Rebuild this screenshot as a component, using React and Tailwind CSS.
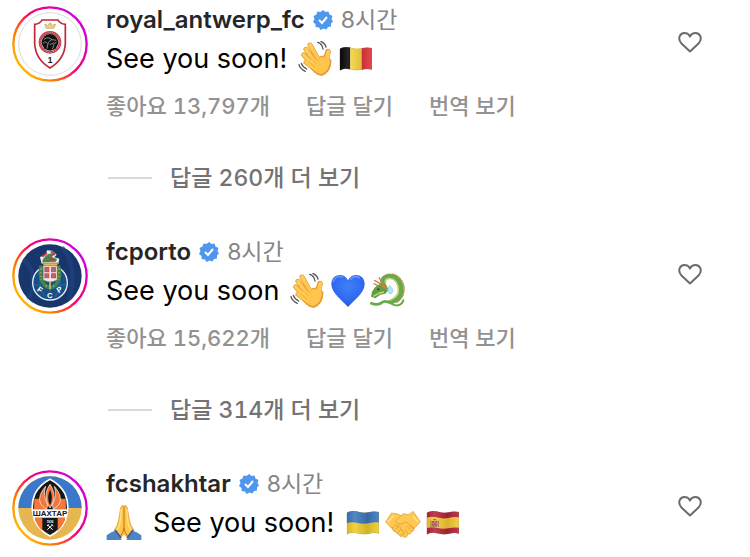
import { useState } from "react";

// Emoji drawings, all on the same 108 unit box
function Wave() {
    const fingers = "M66 66 36 12M54 68 24 25M50 76 17 42M52 84 24 64";
    return (
        <svg viewBox="0 0 108 108" className="size-9" role="img" aria-label="waving hand">
            <g fill="none" strokeLinecap="round" strokeLinejoin="round">
                <path d={fingers} stroke="#df972f" strokeWidth="15" />
                <path d="M80 70 90 32" stroke="#df972f" strokeWidth="17" />
                <path d="M48 62 68 46Q78 50 83 38L99 58Q98 94 73 103Q56 104 38 82Z" fill="#e9a43a" stroke="#df972f" strokeWidth="3" />
                <path d={fingers} stroke="#ffca55" strokeWidth="11" />
                <path d="M82 68 91 32" stroke="#ffca55" strokeWidth="12" />
                <path d="M48 62 68 48Q78 53 86 42L96 58Q94 88 72 98Q56 98 42 80Z" fill="#ffc64e" />
                <path d="M43 35 61 60M32 46 54 68M31 62 49 77" stroke="#e6a136" strokeWidth="2" />
                <path d="M59 4Q72 7 75 24M69 1Q82 8 84 18M3 71Q6 84 22 91M10 67Q13 77 26 84" stroke="#555" strokeWidth="4" />
            </g>
        </svg>
    );
}

function Heart() {
    return (
        <svg viewBox="0 0 108 108" className="size-9" role="img" aria-label="blue heart">
            <defs>
                <radialGradient id="heartFill" cx="50%" cy="35%" r="65%">
                    <stop offset="0" stopColor="#3f80fa" />
                    <stop offset=".7" stopColor="#2f68ef" />
                    <stop offset="1" stopColor="#2858d6" />
                </radialGradient>
            </defs>
            <path d="M54 102C39 84 4 61 4 33C4 2 43-4 54 22C65-4 104 2 104 33C104 61 69 84 54 102Z" fill="url(#heartFill)" />
            <path d="M10 25Q18 6 36 12M62 18Q72 6 88 14" fill="none" stroke="#79a9ff" strokeWidth="5" strokeLinecap="round" opacity=".7" />
        </svg>
    );
}

function Dragon() {
    return (
        <svg viewBox="0 0 108 108" className="size-9" role="img" aria-label="dragon">
            <g fill="none" strokeLinecap="round" strokeLinejoin="round">
                <path d="M34 24Q37 7 56 4Q80 1 94 22Q108 44 98 68Q92 80 80 88" stroke="#cf9448" strokeWidth="5" strokeDasharray="2 5" />
                <path d="M42 38Q33 22 47 13Q67 5 83 20Q100 43 91 66Q83 81 64 87" stroke="#68a94b" strokeWidth="14" />
                <path d="M47 30Q43 20 54 17Q69 14 79 28Q89 46 83 63Q76 75 62 81" stroke="#c3cf7c" strokeWidth="5" />
                <path d="M80 80Q62 93 50 86Q42 83 34 90Q20 98 4 91" stroke="#68a94b" strokeWidth="8" />
                <path d="M56 84Q68 99 84 97Q97 94 100 82" stroke="#68a94b" strokeWidth="6" />
                <path d="M34 34 14 22M28 40 12 32M34 28 28 14" stroke="#d08349" strokeWidth="4" />
            </g>
            <path d="M15 43 31 32 48 36 56 50 46 62 31 65 16 76 3 71 6 56Z" fill="#5e9f43" />
            <path d="M28 37 41 30 51 41 48 52 40 45Z" fill="#b9853f" />
            <path d="M10 70 29 60 42 57" fill="none" stroke="#d3cf74" strokeWidth="4" />
            <circle cx="25" cy="49" r="3" fill="#233d25" />
            <path d="M58 37Q70 46 69 55Q65 67 57 61Q49 55 58 37Z" fill="#b4e6f2" stroke="#8bd0e4" strokeWidth="2" />
        </svg>
    );
}

function Pray() {
    return (
        <svg viewBox="0 0 108 108" className="size-9" role="img" aria-label="folded hands">
            <path d="M2 91Q21 76 33 78L47 105H2ZM106 91Q87 76 75 78L61 105H106Z" fill="#4d84c5" />
            <path d="M54 3Q47-2 44 8L38 45Q36 60 25 75L43 100 54 87 66 100 84 75Q72 60 70 45L64 8Q61-2 54 3Z" fill="#ffc64c" stroke="#dc9631" strokeWidth="2" />
            <path d="M54 4V69Q53 81 43 94M54 69Q56 83 66 95" fill="none" stroke="#ba7427" strokeWidth="3" />
            <path d="M46 12 43 48Q41 66 32 77M62 12 65 48Q67 66 76 77" fill="none" stroke="#ffe27b" strokeWidth="4" />
            <path d="M27 75 45 99M81 75 64 99" stroke="#315f9f" strokeWidth="6" />
        </svg>
    );
}

function Handshake() {
    return (
        <svg viewBox="0 0 108 108" className="size-9" role="img" aria-label="handshake">
            <g fill="#ffc84e" stroke="#d9952f" strokeWidth="2" strokeLinejoin="round" strokeLinecap="round">
                <path d="M19 25 2 51 19 69 58 97Q67 98 69 87Q78 89 79 80Q88 80 87 70L60 38 38 27Z" />
                <path d="M85 20 106 50 91 67 82 70 63 50Q42 65 34 52Q29 48 38 42L55 26 70 29Z" />
                <path d="M22 69 31 60Q39 59 37 67L45 64Q51 68 46 74Q55 73 54 81Q61 83 57 88L52 93Q43 97 42 87Q33 89 34 80Q24 83 22 69Z" />
                <path d="m36 68-7 8M46 75l-7 8M54 83l-7 8M60 74l9 12M67 65l13 14M76 59l12 12" fill="none" />
                <path d="M9 50 24 35M98 50 85 35" fill="none" stroke="#ffe280" strokeWidth="5" />
            </g>
        </svg>
    );
}

function Flag({ label, children }) {
    const outline = "M5 23Q17 15 34 19Q53 25 70 22Q86 17 102 21V86Q87 82 70 87Q53 90 35 85Q18 80 5 89Z";
    const id = `flag-${label}`;
    return (
        <svg viewBox="0 0 108 108" className="size-9" role="img" aria-label={`flag of ${label}`}>
            <defs>
                <clipPath id={id}><path d={outline} /></clipPath>
                <linearGradient id={`${id}-shade`}>
                    <stop offset="0" stopColor="#000" stopOpacity=".1" />
                    <stop offset=".25" stopColor="#fff" stopOpacity=".12" />
                    <stop offset=".65" stopColor="#000" stopOpacity=".12" />
                    <stop offset="1" stopColor="#fff" stopOpacity=".1" />
                </linearGradient>
            </defs>
            <g clipPath={`url(#${id})`}>
                {children}
                <path d={outline} fill={`url(#${id}-shade)`} stroke="#777" strokeOpacity=".5" strokeWidth="2" />
            </g>
        </svg>
    );
}

function BelgiumFlag() {
    return (
        <Flag label="Belgium">
            <path d="M0 0H37V108H0Z" fill="#080808" />
            <path d="M37 0H71V108H37Z" fill="#ffdc43" />
            <path d="M71 0H108V108H71Z" fill="#e1323b" />
        </Flag>
    );
}

function UkraineFlag() {
    return (
        <Flag label="Ukraine">
            <path d="M0 0H108V108H0Z" fill="#efcb2d" />
            <path d="M0 0H108V53Q88 50 70 55Q53 58 35 53Q18 49 0 56Z" fill="#3e77bd" />
        </Flag>
    );
}

function SpainFlag() {
    return (
        <Flag label="Spain">
            <path d="M0 0H108V108H0Z" fill="#b42536" />
            <path d="M0 39Q18 33 35 37Q53 42 70 39Q88 34 108 38V69Q88 65 70 70Q53 73 35 68Q18 64 0 72Z" fill="#f7c838" />
            <path d="M21 48H37V62Q29 72 21 62Z" fill="#b4483e" />
            <path d="M18 47V66M40 47V66" stroke="#8c695a" strokeWidth="3" />
            <path d="M23 46Q29 36 35 46Z" fill="#a14a34" />
            <path d="M29 49V65M22 56H36" stroke="#e5b4a0" strokeWidth="2" />
            <circle cx="29" cy="57" r="3" fill="#4b5a86" />
        </Flag>
    );
}

// Club crests, drawn inside the story ring
function AntwerpCrest() {
    return (
        <g>
            <circle cx="114" cy="114" r="94" fill="#fff" stroke="#dcdcdc" strokeWidth="3" />
            <path d="M90 42H138Q143 53 160 55V112Q158 160 114 186Q70 160 68 112V55Q85 53 90 42Z" fill="#fff" stroke="#bd2637" strokeWidth="5" />
            <path d="M102 67 98 54 107 58 114 50 121 58 131 54 126 67Z" fill="#e7cf8c" stroke="#c9a75a" strokeWidth="2" />
            <circle cx="114" cy="53" r="3" fill="#d7b562" />
            <circle cx="114" cy="109" r="30" fill="#fff" stroke="#c43a49" strokeWidth="8" />
            <circle cx="114" cy="109" r="30" fill="none" stroke="#efc9cd" strokeWidth="2" strokeDasharray="3 4" />
            <circle cx="114" cy="109" r="25" fill="#111" />
            <path d="M96 100Q108 90 120 101L133 103M120 101Q107 104 105 128M93 112Q100 103 107 113M133 108Q125 112 121 130M113 116 127 110" fill="none" stroke="#c4c4c4" strokeWidth="2" />
            <text x="114" y="171" textAnchor="middle" fontSize="25" fontWeight="700" fill="#111">1</text>
        </g>
    );
}

function PortoCrest() {
    return (
        <g>
            <circle cx="114" cy="114" r="95" fill="#18366c" />
            <path d="M35 65Q82 105 51 183M150 28Q199 85 171 185" fill="none" stroke="#234681" strokeWidth="14" opacity=".5" />
            <circle cx="114" cy="134" r="52" fill="#174f86" stroke="#e8eff6" strokeWidth="4" />
            <path d="M86 99Q76 143 99 177M142 99Q153 143 129 177M66 139Q114 154 162 139M114 148V184" fill="none" stroke="#3a6f9f" strokeWidth="2" />
            <path d="M89 77 84 57 102 50 105 37 121 38 134 50 127 58 142 62 139 78Z" fill="#f2eee8" />
            <path d="M92 65Q108 39 130 48L119 57 135 63 132 71 91 73Z" fill="#488250" />
            <path d="M91 56 105 45M117 40 129 50M112 58 126 69" stroke="#c53c42" strokeWidth="6" />
            <path d="M92 75H138L135 83H95Z" fill="#ddb957" stroke="#9a682e" strokeWidth="2" />
            <path d="M88 83Q79 127 103 145Q114 152 126 145Q150 127 139 83" fill="none" stroke="#3e8453" strokeWidth="11" />
            <path d="M87 91V125M141 91V125M101 144 126 144" stroke="#d3a748" strokeWidth="4" strokeDasharray="4 7" />
            <path d="M94 84H135V125Q114 137 94 125Z" fill="#f5e7e3" stroke="#d1a055" strokeWidth="2" />
            <path d="M97 87H112V103H97ZM117 106H132V121H117Z" fill="#dc4950" />
            <path d="M117 87H132V103H117ZM97 106H112V121H97Z" fill="#d45660" />
            <path d="M101 91H108V98H101ZM121 91H128V98H121ZM101 110H108V117H101ZM121 110H128V117H121Z" fill="#6d83b0" />
            <path d="M114 130V154" stroke="#d6ba67" strokeWidth="5" />
            <g fill="#fff" fontSize="23" fontWeight="700" textAnchor="middle">
                <text x="84" y="163" transform="rotate(36 84 155)">F</text>
                <text x="113" y="180">C</text>
                <text x="142" y="163" transform="rotate(-34 142 155)">P</text>
            </g>
        </g>
    );
}

function ShakhtarCrest() {
    const shield = "M114 28Q142 42 159 71Q175 107 160 151Q146 182 114 198Q82 182 68 151Q53 107 69 71Q86 42 114 28Z";
    return (
        <g>
            <circle cx="114" cy="114" r="95" fill="#e6b651" />
            <path d="M19 114A95 95 0 0 1 209 114Z" fill="#3c78c9" />
            <path d={shield} fill="#171717" stroke="#fff" strokeWidth="5" />
            <path d="M67 86H82Q85 106 104 118H66ZM161 86H146Q143 106 124 118H162Z" fill="#f27739" />
            <path d="M104 118Q75 102 85 74Q91 60 101 49Q92 76 107 105ZM124 118Q153 102 143 74Q137 60 127 49Q136 76 121 105Z" fill="#f27739" stroke="#fff" strokeWidth="2" />
            <path d="M114 43Q97 67 104 93Q107 105 114 114Q121 105 124 93Q131 67 114 43Z" fill="#f27739" stroke="#fff" strokeWidth="2" />
            <path d="M114 59Q103 83 114 106Q125 83 114 59Z" fill="#171717" />
            <path d="M68 144H91V183Q74 166 68 144ZM137 144H160Q154 166 137 183Z" fill="#f27739" />
            <path d="M63 118H165L162 143H66Z" fill="#fff" />
            <text x="114" y="139" textAnchor="middle" fontSize="24" fontWeight="800" fill="#171717">ШАХТАР</text>
            <text x="114" y="160" textAnchor="middle" fontSize="9" fontWeight="700" fill="#fff">1936</text>
            <path d="M107 165 122 179M121 165 106 179M105 168 110 163M118 163 124 168" stroke="#fff" strokeWidth="3" />
        </g>
    );
}

function Avatar({ user, children }) {
    return (
        <a href={`#${user}`} aria-label={user} className="shrink-0">
            <svg viewBox="0 0 228 228" className="size-19" fontFamily="Liberation Sans, sans-serif" aria-hidden="true">
                <defs>
                    <linearGradient id={`ring-${user}`} x1=".1" y1=".9" x2=".9" y2=".25">
                        <stop offset="0" stopColor="#ffc400" />
                        <stop offset=".28" stopColor="#ff7a00" />
                        <stop offset=".58" stopColor="#ff006b" />
                        <stop offset="1" stopColor="#d300d3" />
                    </linearGradient>
                </defs>
                <circle cx="114" cy="114" r="110" fill="none" stroke={`url(#ring-${user})`} strokeWidth="7" />
                {children}
            </svg>
        </a>
    );
}

function VerifiedBadge() {
    return (
        <svg viewBox="0 0 40 40" className="size-5" role="img" aria-label="verified">
            <path
                d="M20 0 25 4 31 3 33 9 39 12 37 18 40 23 36 27 36 33 30 34 27 39 21 37 15 40 12 35 5 34 5 28 0 24 3 18 1 12 7 9 9 3 15 4Z"
                fill="#4f96ed"
            />
            <path d="M12 20 18 26 28 14" fill="none" stroke="#fff" strokeWidth="4" />
        </svg>
    );
}

function LikeButton({ user }) {
    const [liked, setLiked] = useState(false);
    return (
        <button
            type="button"
            aria-label={`Like comment by ${user}`}
            aria-pressed={liked}
            onClick={() => setLiked(!liked)}
            className="mt-6 shrink-0 self-start"
        >
            <svg viewBox="0 0 24 24" className="size-6" fill={liked ? "#ff3040" : "none"} stroke={liked ? "#ff3040" : "#6b6b6b"} strokeWidth="2" strokeLinejoin="round">
                <path d="M12 21.500 3.500 13.500C-1 8.500 2 3 6.500 3C9.500 3 11 4.500 12 6.500C13 4.500 14.500 3 17.500 3C22 3 25 8.500 20.500 13.500Z" />
            </svg>
        </button>
    );
}

const comments = [
    {
        user: "royal_antwerp_fc",
        crest: <AntwerpCrest />,
        text: "See you soon!",
        after: [<Wave key="wave" />, <BelgiumFlag key="be" />],
        likes: "13,797",
        replies: 260,
    },
    {
        user: "fcporto",
        crest: <PortoCrest />,
        text: "See you soon",
        after: [<Wave key="wave" />, <Heart key="heart" />, <Dragon key="dragon" />],
        likes: "15,622",
        replies: 314,
    },
    {
        user: "fcshakhtar",
        crest: <ShakhtarCrest />,
        before: <Pray />,
        text: "See you soon!",
        after: [<UkraineFlag key="ua" />, <Handshake key="shake" />, <SpainFlag key="es" />],
    },
];

function Comment({ comment }) {
    const { user, crest, before, text, after, likes, replies } = comment;
    return (
        <li className="flex pr-12 pl-3">
            <Avatar user={user}>{crest}</Avatar>
            <div className="ml-[18px] min-w-0 flex-1">
                <div className="flex h-7 items-center gap-2 text-[23px] leading-7">
                    <a href={`#${user}`} className="text-[24px] font-semibold text-[#262626]">{user}</a>
                    <div className="flex items-center gap-2">
                        <VerifiedBadge />
                        <time className="text-[#858585]">8시간</time>
                    </div>
                </div>
                <div className="mt-[5px] flex h-10 items-center gap-[11px] text-[27px] text-black">
                    {before}
                    <p className="whitespace-nowrap">{text}</p>
                    <span className="flex gap-1">{after}</span>
                </div>
                {likes && (
                    <div className="mt-[11px] flex gap-9 text-[22px] leading-8 font-medium text-[#929292] tabular-nums">
                        <button type="button">좋아요 {likes}개</button>
                        <button type="button">답글 달기</button>
                        <button type="button">번역 보기</button>
                    </div>
                )}
                {replies && (
                    <button type="button" className="mt-10 mb-11 flex items-center gap-[18px] text-[23px] leading-8 font-medium text-[#737373] tabular-nums">
                        <span className="ml-0.5 h-0.5 w-11 bg-[#d9d9d9]" />
                        답글 {replies}개 더 보기
                    </button>
                )}
            </div>
            <LikeButton user={user} />
        </li>
    );
}

export default function App() {
    return (
        <main className="min-h-screen bg-white pt-1.5 font-['Inter','Noto_Sans_CJK_KR',sans-serif]">
            <ul>
                {comments.map((comment) => (
                    <Comment key={comment.user} comment={comment} />
                ))}
            </ul>
        </main>
    );
}
